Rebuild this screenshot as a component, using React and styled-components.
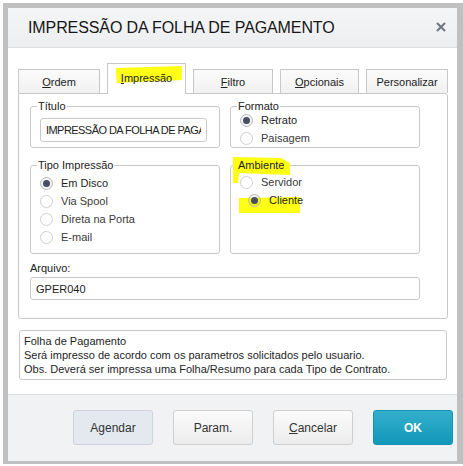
import styled, { createGlobalStyle, css } from "styled-components";

const Global = createGlobalStyle`
  body {
    margin: 0;
    background: #fff;
    font-family: "Liberation Sans", Arial, sans-serif;
  }
`;

const Dialog = styled.div`
  margin: 3px 0 0 3px;
  width: 449px;
  height: 451px;
  border: 5px solid #c0c0c0;
  border-right-width: 6px;
  display: flex;
  flex-direction: column;
  background: #fff;
`;

const Header = styled.div`
  height: 39px;
  flex-shrink: 0;
  display: flex;
  align-items: center;
  justify-content: space-between;
  padding: 0 11px 0 20px;
  border-bottom: 1px solid #dcdddf;
  background: linear-gradient(#f4f5f6, #eceef0);
`;

const Title = styled.div`
  font-size: 16px;
  color: #161616;
  letter-spacing: -0.1px;
`;

const Close = styled.svg`
  width: 10px;
  height: 10px;
  margin-top: -1px;
`;

const Body = styled.div`
  padding: 15px 9px 14px 10px;
`;

const TabRow = styled.div`
  display: flex;
  align-items: flex-end;
  gap: 7px;
  height: 30px;
`;

const Tab = styled.div`
  position: relative;
  isolation: isolate;
  width: ${(p) => p.$w}px;
  height: 24px;
  box-sizing: border-box;
  border: 1px solid #c8c8c8;
  border-bottom: none;
  background: linear-gradient(#fbfbfb, #f1f1f1);
  display: flex;
  align-items: center;
  justify-content: center;
  font-size: 11px;
  color: #222;
  ${(p) =>
    p.$active &&
    css`
      height: 31px;
      margin-bottom: -1px;
      background: #fff;
      z-index: 1;
      padding-bottom: 2px;
    `}
`;

const TabText = styled.span`
  position: relative;
  isolation: isolate;
`;

const Marker = styled.span`
  position: relative;
  &::before {
    content: "";
    position: absolute;
    z-index: -1;
    left: ${(p) => p.$l}px;
    top: ${(p) => p.$t}px;
    width: ${(p) => p.$w}px;
    height: ${(p) => p.$h}px;
    background: #ffff14;
    clip-path: ${(p) => p.$clip || "none"};
  }
`;

const Panel = styled.div`
  border: 1px solid #c8c8c8;
  border-radius: 0 3px 3px 3px;
  padding: 6px 27px 18px 11px;
`;

const Grid = styled.div`
  display: grid;
  grid-template-columns: 190px 190px;
  column-gap: 10px;
  row-gap: 11px;
`;

const Group = styled.fieldset`
  margin: 0;
  padding: 0 6px ${(p) => p.$pb}px 6px;
  border: 1px solid #c8c8c8;
  border-radius: 3px;
  min-width: 0;
`;

const Legend = styled.legend`
  position: relative;
  isolation: isolate;
  padding: 0 1px;
  font-size: 11px;
  line-height: 13px;
  color: #222;
`;

const GroupBody = styled.div`
  padding: 0 6px 0 3px;
  margin-top: ${(p) => p.$mt}px;
`;

const TextInput = styled.input`
  display: block;
  box-sizing: border-box;
  width: 100%;
  height: ${(p) => p.$h || 24}px;
  margin: ${(p) => p.$mt || 0}px 0 0;
  padding: 0 5px;
  border: 1px solid #c8c8c8;
  border-radius: 3px;
  background: #fff;
  font-family: "Liberation Sans", Arial, sans-serif;
  font-size: 11px;
  letter-spacing: ${(p) => (p.$tight ? "-0.55px" : "0")};
  color: #222;
  outline: none;
`;

const RadioRow = styled.div`
  position: relative;
  isolation: isolate;
  display: flex;
  align-items: center;
  gap: 8px;
  height: 18px;
  font-size: 11px;
  color: ${(p) => (p.$checked ? "#1e1e1e" : "#3a3a3a")};
`;

const RadioDot = styled.span`
  width: 13px;
  height: 13px;
  box-sizing: border-box;
  border-radius: 50%;
  border: 1px solid ${(p) => (p.$checked ? "#b9b9b9" : "#cfcfcf")};
  background: ${(p) => (p.$checked ? "rgba(0,0,0,0.05)" : "transparent")};
  display: grid;
  place-items: center;
  &::after {
    content: "";
    width: 7px;
    height: 7px;
    border-radius: 50%;
    background: ${(p) => (p.$checked ? "#484e63" : "transparent")};
  }
`;

const FieldLabel = styled.div`
  margin-top: 7px;
  font-size: 11px;
  line-height: 14px;
  color: #222;
`;

const Info = styled.div`
  margin: 11px 1px 0;
  border: 1px solid #c8c8c8;
  border-radius: 3px;
  padding: 3px 4px 3px;
  font-size: 11px;
  line-height: 14px;
  color: #1e1e1e;
`;

const Footer = styled.div`
  margin-top: auto;
  height: 51px;
  flex-shrink: 0;
  display: flex;
  justify-content: flex-end;
  gap: 20px;
  padding: 15px 4px 0 0;
  border-top: 1px solid #dcdddf;
  background: #f1f2f3;
`;

const Button = styled.button`
  width: 80px;
  height: 35px;
  border-radius: 3px;
  border: 1px solid #cfcfcf;
  background: linear-gradient(#fbfbfb, #ececec);
  font-family: "Liberation Sans", Arial, sans-serif;
  font-size: 12px;
  color: #333;
  ${(p) =>
    p.$variant === "soft" &&
    css`
      background: #e4e9f0;
      border-color: #cdd3dc;
    `}
  ${(p) =>
    p.$variant === "primary" &&
    css`
      background: linear-gradient(#33afcc, #1298b9);
      border-color: #1592b2;
      color: #fff;
      font-weight: bold;
    `}
`;

function Radio({ label, checked, hl }) {
  return (
    <RadioRow $checked={checked}>
      {hl && <Marker $l={-1} $t={-3} $w={61} $h={16} $clip="polygon(0 1px, 100% 0, 100% 100%, 0 100%)" />}
      <RadioDot $checked={checked} />
      <span>{label}</span>
    </RadioRow>
  );
}

const tabs = [
  { w: 82, label: <><u>O</u>rdem</> },
  { w: 79, label: <><u>I</u>mpressão</>, active: true },
  { w: 80, label: <><u>F</u>iltro</> },
  { w: 79, label: <><u>O</u>pcionais</> },
  { w: 82, label: "Personalizar" },
];

export default function App() {
  return (
    <>
      <Global />
      <Dialog>
        <Header>
          <Title>IMPRESSÃO DA FOLHA DE PAGAMENTO</Title>
          <Close viewBox="0 0 10 10">
            <path d="M1 1L9 9M9 1L1 9" stroke="#6d7580" strokeWidth="2" />
          </Close>
        </Header>
        <Body>
          <TabRow>
            {tabs.map((t, i) => (
              <Tab key={i} $w={t.w} $active={t.active}>
                {t.active ? (
                  <TabText>
                    <Marker $l={-5} $t={-6} $w={66} $h={17} $clip="polygon(0 2px, 100% 0, 100% 14px, 1px 100%)" />
                    {t.label}
                  </TabText>
                ) : (
                  t.label
                )}
              </Tab>
            ))}
          </TabRow>
          <Panel>
            <Grid>
              <Group $pb={0}>
                <Legend>Título</Legend>
                <GroupBody $mt={0}>
                  <TextInput $mt={5} $tight readOnly value="IMPRESSÃO DA FOLHA DE PAGAMENTO" />
                </GroupBody>
              </Group>
              <Group $pb={0}>
                <Legend>Formato</Legend>
                <GroupBody $mt={-2}>
                  <Radio label="Retrato" checked />
                  <Radio label="Paisagem" />
                </GroupBody>
              </Group>
              <Group $pb={7}>
                <Legend>Tipo Impressão</Legend>
                <GroupBody $mt={2}>
                  <Radio label="Em Disco" checked />
                  <Radio label="Via Spool" />
                  <Radio label="Direta na Porta" />
                  <Radio label="E-mail" />
                </GroupBody>
              </Group>
              <Group $pb={7}>
                <Legend>
                  <Marker $l={-5} $t={-2} $w={57} $h={26} $clip="polygon(0 0, 48px 1px, 57px 6px, 57px 18px, 6px 16px, 5px 26px, 0 26px)" />
                  Ambiente
                </Legend>
                <GroupBody $mt={1}>
                  <Radio label="Servidor" />
                  <Radio label="Cliente" checked hl />
                </GroupBody>
              </Group>
            </Grid>
            <FieldLabel>Arquivo:</FieldLabel>
            <TextInput $mt={2} $h={23} readOnly value="GPER040" />
          </Panel>
          <Info>
            Folha de Pagamento
            <br />
            Será impresso de acordo com os parametros solicitados pelo usuario.
            <br />
            Obs. Deverá ser impressa uma Folha/Resumo para cada Tipo de Contrato.
          </Info>
        </Body>
        <Footer>
          <Button $variant="soft">Agendar</Button>
          <Button>Param.</Button>
          <Button>
            <u>C</u>ancelar
          </Button>
          <Button $variant="primary">OK</Button>
        </Footer>
      </Dialog>
    </>
  );
}
